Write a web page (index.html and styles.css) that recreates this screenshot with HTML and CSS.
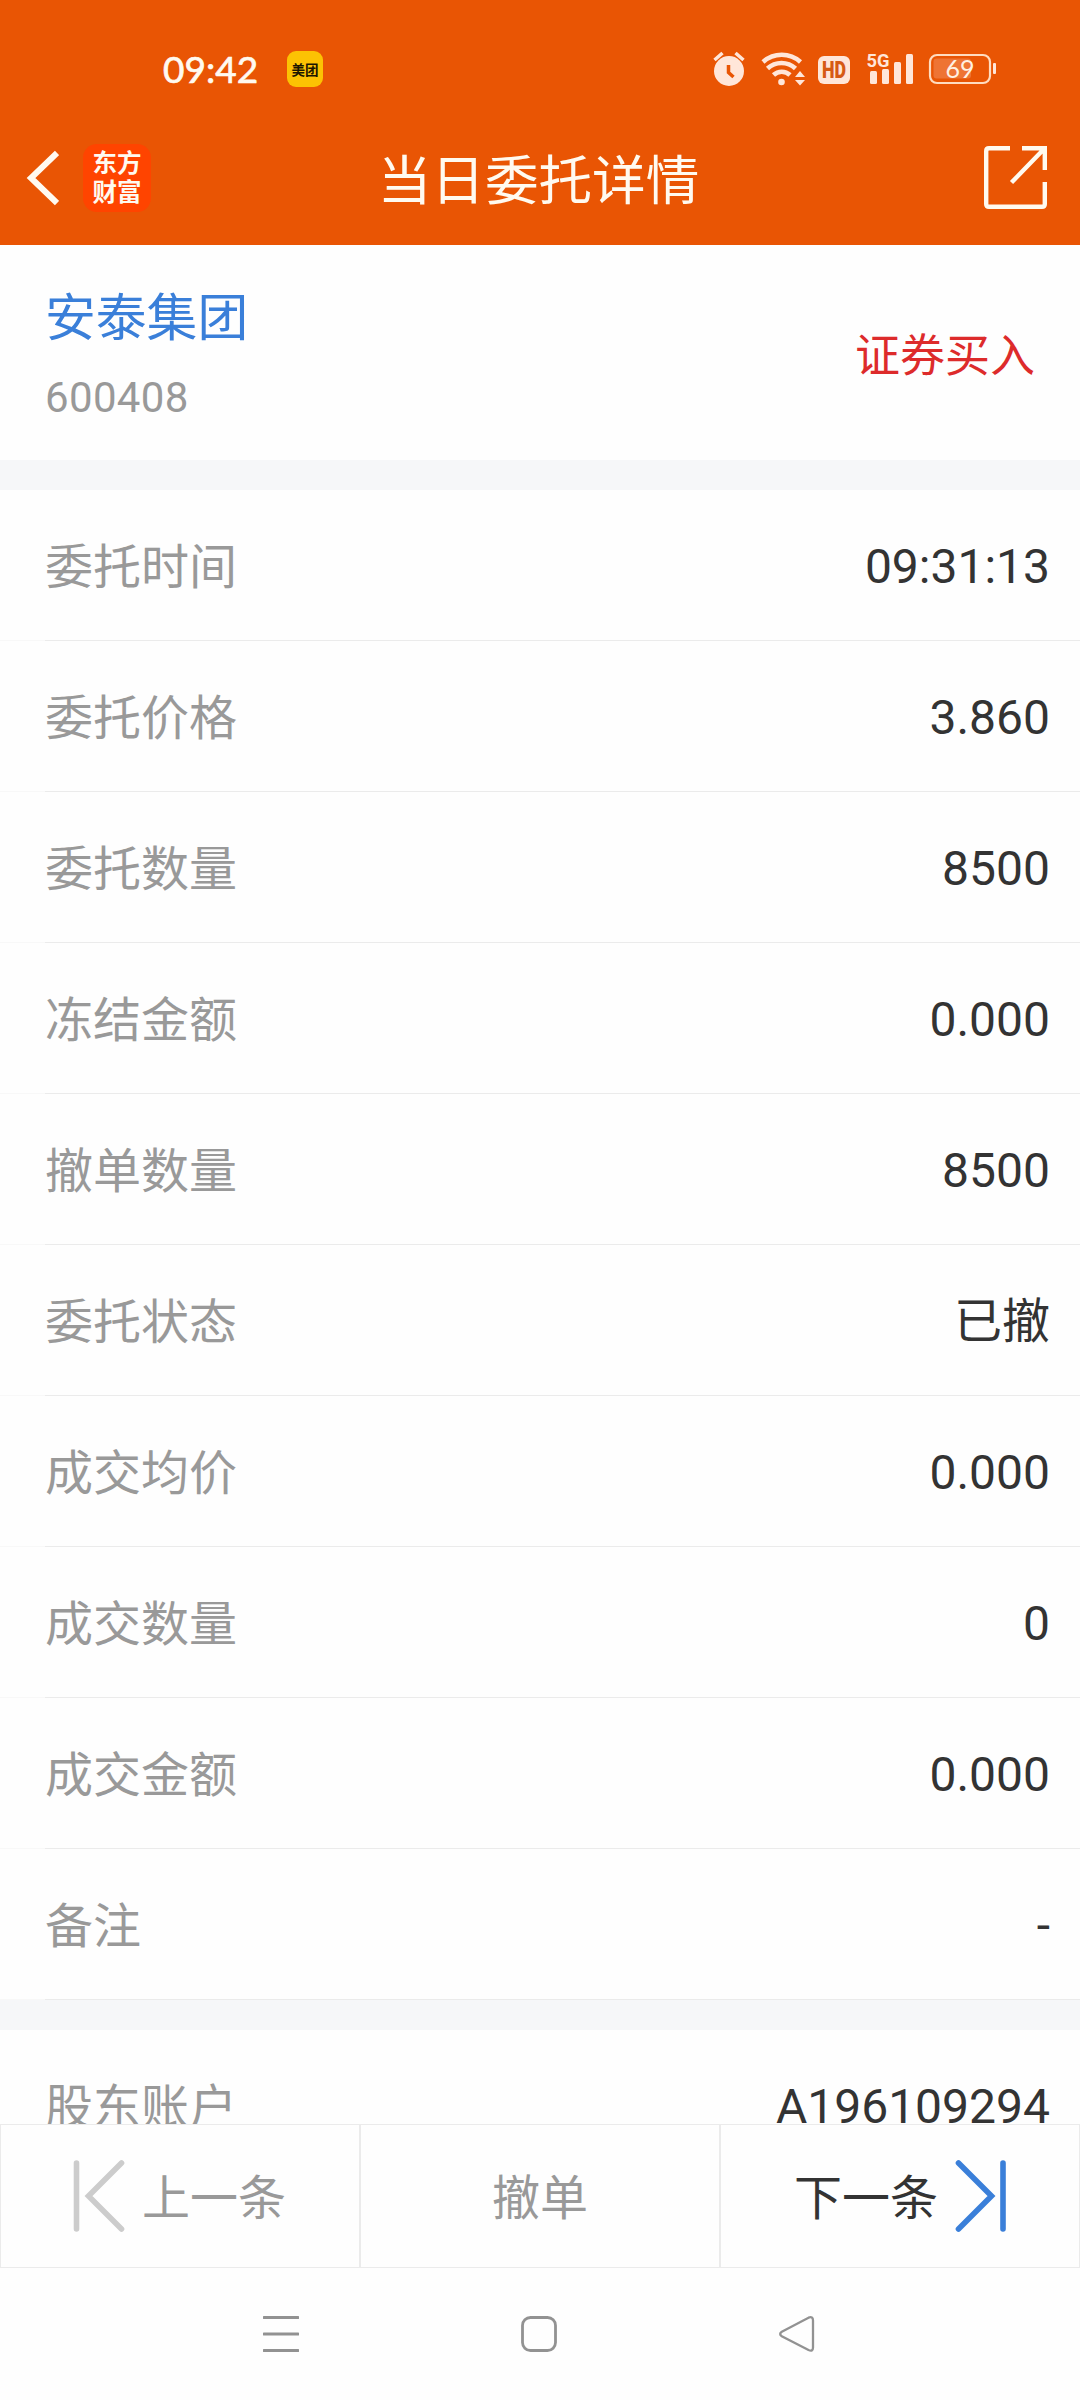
FILE: index.html
```html
<!DOCTYPE html>
<html lang="zh-CN">
<head>
<meta charset="utf-8">
<title>当日委托详情</title>
<link rel="stylesheet" href="styles.css">
</head>
<body>
<div class="screen">
  <header class="header">
    <div class="status">
      <span class="clock">09:42</span>
      <span class="notice">美团</span>
      <svg class="status-icons" width="290" height="40" viewBox="0 0 290 40">
        <g fill="#ffe6d9">
          <circle cx="23" cy="22" r="15"/>
          <path d="M8.500 11l8-7M37.500 11l-8-7" stroke="#ffe6d9" stroke-width="3.500" fill="none"/>
          <path d="M22.500 16v7.500l5 4.500" stroke="#e95504" stroke-width="3.500" fill="none"/>
          <circle cx="75.500" cy="33" r="3.300"/>
          <path d="M57 13a28 28 0 0 1 37.500 0M61.500 19.500a20.500 20.500 0 0 1 28 0M67.500 26a12 12 0 0 1 16.500 0" stroke="#ffe6d9" stroke-width="4.600" fill="none"/>
          <path d="M89 28l5-6 5 6zM89 31h10l-5 5.500z"/>
          <rect x="112" y="7" width="32" height="28" rx="6"/>
          <rect x="164" y="22" width="7" height="13" rx="1.500"/>
          <rect x="176" y="20" width="7" height="15" rx="1.500"/>
          <rect x="188" y="13" width="7" height="22" rx="1.500"/>
          <rect x="200" y="5" width="7" height="30" rx="1.500"/>
          <text class="net" x="160.500" y="18" textLength="23" lengthAdjust="spacingAndGlyphs">5G</text>
          <rect x="287" y="14" width="3" height="11" rx="1"/>
        </g>
        <text class="hd" x="116" y="29" textLength="24" lengthAdjust="spacingAndGlyphs">HD</text>
        <rect x="227.500" y="9.500" width="37.500" height="20" rx="3" fill="#ee7434"/>
        <rect x="224" y="6" width="60" height="28" rx="7" fill="none" stroke="#ffdcc0" stroke-width="2.200"/>
        <text class="level" x="254" y="28.500" text-anchor="middle">69</text>
      </svg>
    </div>
    <div class="titlebar">
      <svg class="back" width="34" height="58" viewBox="0 0 34 58"><path d="M32 4L6 29 32 54" fill="none" stroke="#fffaf0" stroke-width="6"/></svg>
      <span class="brand"><span>东方</span><span>财富</span></span>
      <h1 class="title">当日委托详情</h1>
      <svg class="share" width="63" height="63" viewBox="0 0 63 63"><path d="M26 2.200H5Q2.200 2.200 2.200 5V58Q2.200 60.800 5 60.800H58Q60.800 60.800 60.800 58V36M38 2.200H60.800V24M60 3L27.500 36.500" fill="none" stroke="#fffaf0" stroke-width="4.400"/></svg>
    </div>
  </header>

  <section class="stock">
    <div class="stock-id">
      <span class="stock-name">安泰集团</span>
      <span class="stock-code">600408</span>
    </div>
    <span class="side">证券买入</span>
  </section>

  <main class="details">
    <dl class="group">
      <div class="row"><dt>委托时间</dt><dd>09:31:13</dd></div>
      <div class="row"><dt>委托价格</dt><dd>3.860</dd></div>
      <div class="row"><dt>委托数量</dt><dd>8500</dd></div>
      <div class="row"><dt>冻结金额</dt><dd>0.000</dd></div>
      <div class="row"><dt>撤单数量</dt><dd>8500</dd></div>
      <div class="row"><dt>委托状态</dt><dd>已撤</dd></div>
      <div class="row"><dt>成交均价</dt><dd>0.000</dd></div>
      <div class="row"><dt>成交数量</dt><dd>0</dd></div>
      <div class="row"><dt>成交金额</dt><dd>0.000</dd></div>
      <div class="row"><dt>备注</dt><dd>-</dd></div>
    </dl>
    <dl class="group">
      <div class="row"><dt>股东账户</dt><dd>A196109294</dd></div>
    </dl>
  </main>

  <div class="actions">
    <div class="action prev">
      <svg width="52" height="72" viewBox="0 0 52 72"><path d="M3.500 3V69M48.500 3L15.500 36 48.500 69" fill="none" stroke="#ccc" stroke-width="5.600" stroke-linecap="round"/></svg>
      <span>上一条</span>
    </div>
    <div class="action cancel"><span>撤单</span></div>
    <div class="action next">
      <span>下一条</span>
      <svg width="52" height="72" viewBox="0 0 52 72"><path d="M48 3V69M3.500 3L36.500 36 3.500 69" fill="none" stroke="#3a7fd9" stroke-width="5.600" stroke-linecap="round"/></svg>
    </div>
  </div>

  <nav class="navbar">
    <svg width="36" height="36" viewBox="0 0 36 36"><path d="M1 1.500H35M1 18H35M1 34.500H35" stroke="#929292" stroke-width="3" stroke-linecap="round"/></svg>
    <svg width="36" height="36" viewBox="0 0 36 36"><rect x="1.500" y="1.500" width="33" height="33" rx="8" fill="none" stroke="#929292" stroke-width="2.800"/></svg>
    <svg width="36" height="36" viewBox="0 0 36 36"><path d="M2.800 15.700L29.500 1.700Q34 0 34 4.500V31.500Q34 36 29.500 34L2.800 20.300Q-.500 18 2.800 15.700Z" fill="none" stroke="#929292" stroke-width="2.300"/></svg>
  </nav>
</div>
</body>
</html>
```
FILE: styles.css
```css
* { box-sizing: border-box; }

body {
  margin: 0;
  background: #fefefe;
  font-family: Roboto, "Noto Sans CJK SC", sans-serif;
}

svg { display: block; flex: none; }

.screen {
  display: flex;
  flex-direction: column;
  width: 1080px;
  height: 2400px;
  overflow: hidden;
}

.header {
  flex: none;
  height: 245px;
  background: #e95504;
  color: #fffaf0;
}

.status {
  display: flex;
  align-items: center;
  height: 110px;
  padding: 28px 84px 0 163px;
}

.clock {
  width: 124px;
  font: 400 37px/40px Lato, sans-serif;
  -webkit-text-stroke: 0.7px #fffaf0;
}

.notice {
  width: 36px;
  height: 36px;
  border-radius: 9px;
  background: #fcc203;
  color: #1c1600;
  font: 700 13.5px/36px "Noto Sans CJK SC", sans-serif;
  text-align: center;
}

.status-icons { margin-left: auto; }

.net { font: 700 19px Roboto, sans-serif; }
.hd { font: 900 23px Roboto, sans-serif; fill: #d65a14; }
.level { font: 400 25px Lato, sans-serif; fill: #fff0e2; }

.titlebar {
  display: flex;
  align-items: center;
  height: 135px;
  padding: 0 33px 0 25px;
}

.brand {
  display: flex;
  flex-direction: column;
  justify-content: center;
  width: 68px;
  height: 68px;
  padding-bottom: 3px;
  margin-left: 24px;
  border-radius: 14px;
  background: #ff4400;
  font: 700 24.5px/29px "Noto Sans CJK SC", sans-serif;
  text-align: center;
}

.title {
  flex: 1;
  margin: 9px 0 0;
  padding-right: 58px;
  font-size: 53.600px;
  font-weight: 400;
  line-height: 80px;
  text-align: center;
}

.stock {
  display: flex;
  flex: none;
  align-items: center;
  justify-content: space-between;
  height: 215px;
  padding: 0 45px;
}

.stock-id {
  display: flex;
  flex-direction: column;
  padding-top: 10px;
}

.stock-name {
  color: #3a7fd9;
  font-size: 50.800px;
  line-height: 80px;
}

.stock-code {
  color: #999;
  font-size: 42px;
  letter-spacing: 0.350px;
  line-height: 78px;
}

.side {
  color: #dd2b2b;
  font-size: 45px;
}

.details {
  flex: 1;
  min-height: 0;
  overflow: hidden;
}

.group {
  margin: 0;
  border-top: 30px solid #f6f7f9;
}

.row {
  display: flex;
  align-items: center;
  justify-content: space-between;
  height: 151px;
  padding: 2px 30px 0 45px;
  background: linear-gradient(to right, #f8f8f8 45px, #ebebeb 45px) bottom / 100% 1px no-repeat;
  font-size: 48px;
  line-height: 72px;
}

.row dt {
  padding-top: 3px;
  color: #999;
}

.row dd { margin: 0; color: #333; }

.actions {
  display: grid;
  flex: none;
  grid-template-columns: repeat(3, 1fr);
  height: 144px;
}

.action {
  display: flex;
  align-items: center;
  border: 1px solid #ebebeb;
  color: #999;
  font-size: 48px;
  line-height: 72px;
}

.action span { padding-top: 6px; }
.prev { gap: 17px; padding-left: 72px; }
.cancel { justify-content: center; }
.next { gap: 17px; padding-left: 73px; color: #333; }

.navbar {
  display: flex;
  flex: none;
  align-items: center;
  gap: 222px;
  height: 132px;
  padding-left: 263px;
}
```
